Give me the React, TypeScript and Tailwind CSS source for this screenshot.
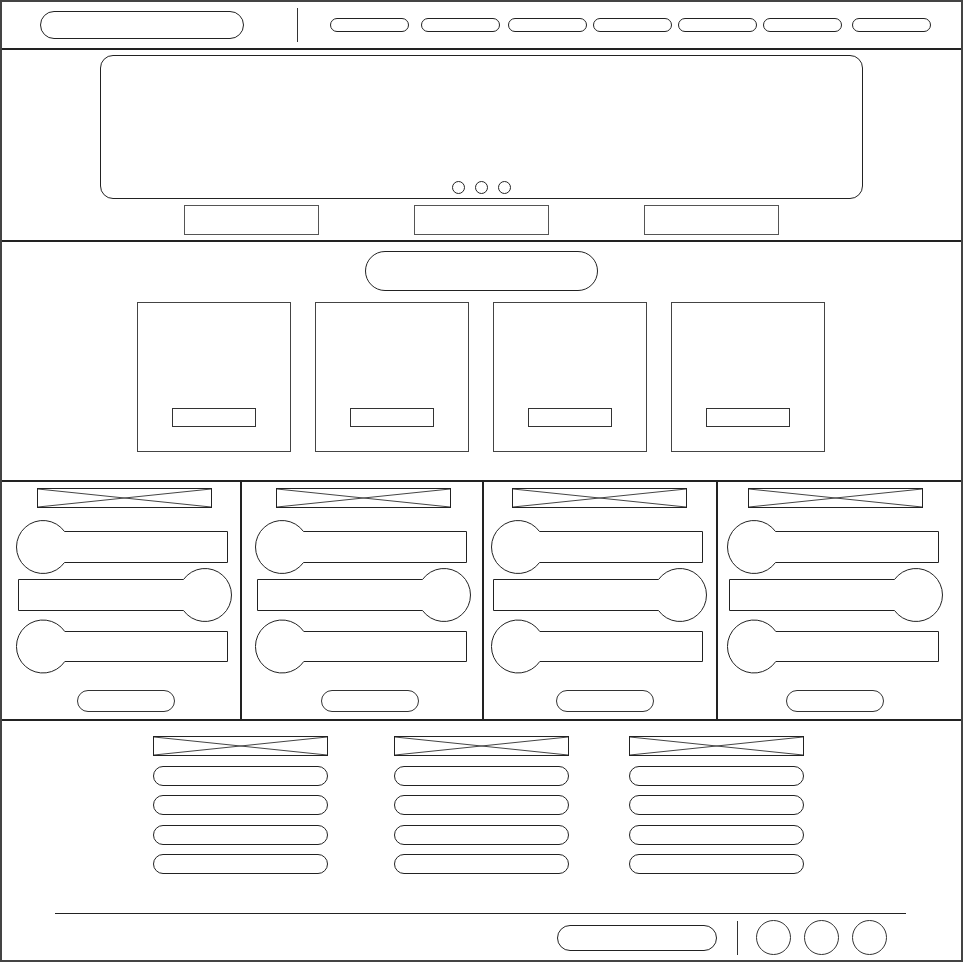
import React from 'react';

// nav pills are not evenly spaced in the mockup
const navItems = [
  { key: 1, className: 'ml-0' },
  { key: 2, className: 'ml-[12px]' },
  { key: 3, className: 'ml-[8px]' },
  { key: 4, className: 'ml-[6px]' },
  { key: 5, className: 'ml-[6px]' },
  { key: 6, className: 'ml-[6px]' },
  { key: 7, className: 'ml-[10px]' },
];
const cards = [0, 1, 2, 3];

// column widths / left padding for the "person list" columns
const listColumns = [
  { key: 'a', className: 'w-[240px] pl-[14px] border-r-2 border-[#222]', pill: 'ml-[61px]' },
  { key: 'b', className: 'w-[242px] pl-[13px] border-r-2 border-[#222]', pill: 'ml-[66px]' },
  { key: 'c', className: 'w-[234px] pl-[7px] border-r-2 border-[#222]', pill: 'ml-[65px]' },
  { key: 'd', className: 'flex-1 pl-[9px]', pill: 'ml-[59px]' },
];

const linkColumns = [
  { key: 'a', className: 'ml-[151px]' },
  { key: 'b', className: 'ml-[66px]' },
  { key: 'c', className: 'ml-[60px]' },
];

const ImageBox = () => (
  <div className="relative w-[175px] h-[20px] border border-[#222]">
    <svg className="absolute inset-0 w-full h-full" viewBox="0 0 100 100" preserveAspectRatio="none">
      <line x1="0" y1="0" x2="100" y2="100" stroke="#444" strokeWidth="1" vectorEffect="non-scaling-stroke" />
      <line x1="100" y1="0" x2="0" y2="100" stroke="#444" strokeWidth="1" vectorEffect="non-scaling-stroke" />
    </svg>
  </div>
);

// avatar + text bubble rows, drawn as one outline each
const PersonRows = () => (
  <svg width="216" height="154" viewBox="0 0 216 154" fill="none" stroke="#222" strokeWidth="1">
    <path d="M48.5 11.5 H211.5 V42.5 H48.5 A26.5 26.5 0 1 1 48.5 11.5 Z" />
    <path d="M167.5 59.5 H2.5 V90.5 H167.5 A26.5 26.5 0 1 0 167.5 59.5 Z" />
    <path d="M48.8 111.5 H211.5 V141.5 H48.8 A26.5 26.5 0 1 1 48.8 111.5 Z" />
  </svg>
);

const App = () => {
  return (
    <div className="w-[963px] h-[962px] bg-white" style={{ fontFamily: '"Liberation Sans", sans-serif' }}>
      <div className="w-full h-full border-2 border-[#444] flex flex-col">
        {/* header */}
        <header className="h-[48px] shrink-0 border-b-2 border-[#222] flex items-center pl-[38px]">
          <div className="w-[204px] h-[28px] rounded-full border border-[#222]" />
          <div className="ml-[53px] w-px h-[34px] bg-[#333]" />
          <nav className="ml-[32px] flex">
            {navItems.map(item => (
              <div key={item.key} className={`${item.className} w-[79px] h-[14px] rounded-full border border-[#222]`} />
            ))}
          </nav>
        </header>

        {/* hero */}
        <section className="h-[192px] shrink-0 border-b-2 border-[#222] pt-[5px]">
          <div className="ml-[98px] w-[763px] h-[144px] rounded-[13px] border border-[#222] flex items-end justify-center gap-[10px] pb-[4px]">
            {[0, 1, 2].map(i => (
              <div key={i} className="w-[13px] h-[13px] rounded-full border border-[#222]" />
            ))}
          </div>
          <div className="mt-[6px] pl-[182px] flex gap-[95px]">
            {[0, 1, 2].map(i => (
              <div key={i} className="w-[135px] h-[30px] border-[1.5px] border-[#555]" />
            ))}
          </div>
        </section>

        {/* featured */}
        <section className="h-[240px] shrink-0 border-b-2 border-[#222] flex flex-col items-center pt-[9px]">
          <div className="w-[233px] h-[40px] rounded-full border border-[#222]" />
          <div className="mt-[11px] flex gap-[24px] -ml-[2px]">
            {cards.map(i => (
              <div key={i} className="w-[154px] h-[150px] border border-[#444] flex flex-col items-center pt-[105px]">
                <div className="w-[84px] h-[19px] border border-[#333]" />
              </div>
            ))}
          </div>
        </section>

        {/* people columns */}
        <section className="h-[239px] shrink-0 border-b-2 border-[#222] flex">
          {listColumns.map(col => (
            <div key={col.key} className={col.className}>
              <div className="w-[216px] flex flex-col">
                <div className="mt-[6px] ml-[21px]">
                  <ImageBox />
                </div>
                <div className="mt-[12px]">
                  <PersonRows />
                </div>
                <div className={`${col.pill} mt-[16px] w-[98px] h-[22px] rounded-full border border-[#333]`} />
              </div>
            </div>
          ))}
        </section>

        {/* footer */}
        <footer className="flex-1 flex flex-col">
          <div className="mt-[15px] flex">
            {linkColumns.map(col => (
              <div key={col.key} className={`${col.className} flex flex-col gap-[9.5px]`}>
                <ImageBox />
                {[0, 1, 2, 3].map(i => (
                  <div key={i} className="w-[175px] h-[20px] rounded-full border border-[#222]" />
                ))}
              </div>
            ))}
          </div>
          <div className="mt-[39px] ml-[53px] w-[851px] h-px bg-[#222]" />
          <div className="mt-[6px] flex items-center">
            <div className="ml-[555px] w-[160px] h-[26px] rounded-full border border-[#222]" />
            <div className="ml-[20px] w-px h-[34px] bg-[#333]" />
            <div className="ml-[18px] flex gap-[13px]">
              {[0, 1, 2].map(i => (
                <div key={i} className="w-[35px] h-[35px] rounded-full border border-[#333]" />
              ))}
            </div>
          </div>
        </footer>
      </div>
    </div>
  );
};

export default App;
